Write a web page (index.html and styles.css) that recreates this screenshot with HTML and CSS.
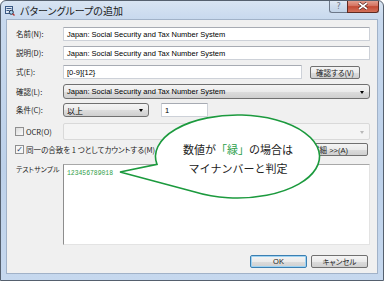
FILE: index.html
```html
<!doctype html>
<html>
<head>
    <title>パターングループの追加</title>
    <meta charset="utf-8" />
    <link rel="stylesheet" href="styles.css">
</head>
<body>
<div class="window">
    <div class="titlebar">
        <svg class="appicon" viewBox="0 0 10 10">
            <rect x="0.5" y="0.5" width="7" height="7" fill="#dfe8f4" stroke="#3b5a86"/>
            <path d="M1.5 2.5h5M1.5 4.5h3" stroke="#3b5a86"/>
            <circle cx="6.3" cy="6.3" r="2" fill="#a8d4f2" stroke="#1f2f4a"/>
            <path d="M7.7 7.7l1.8 1.8" stroke="#b8322a" stroke-width="1.4"/>
        </svg>
        <span class="title">パターングループの追加</span>
        <div class="capbtns">
            <div class="capbtn help">?</div>
            <div class="capbtn close">
                <svg viewBox="0 0 12 8" width="12" height="8">
                    <path d="M2 1l8 6M10 1l-8 6" stroke="#4a1a14" stroke-width="3"/>
                    <path d="M2 1l8 6M10 1l-8 6" stroke="#fff" stroke-width="1.6"/>
                </svg>
            </div>
        </div>
    </div>
    <div class="client">
        <div class="row">
            <span class="lbl">名前(N):</span>
            <div class="edit">Japan: Social Security and Tax Number System</div>
        </div>
        <div class="row">
            <span class="lbl">説明(D):</span>
            <div class="edit">Japan: Social Security and Tax Number System</div>
        </div>
        <div class="row">
            <span class="lbl">式(E):</span>
            <div class="edit">[0-9]{12}</div>
            <div class="btn verify">確認する(V)</div>
        </div>
        <div class="row r4">
            <span class="lbl">確認(L):</span>
            <div class="combo">Japan: Social Security and Tax Number System<span class="arrow"></span></div>
        </div>
        <div class="row r5">
            <span class="lbl">条件(C):</span>
            <div class="combo small">以上<span class="arrow"></span></div>
            <div class="edit num">1</div>
        </div>
        <div class="row r6">
            <span class="lbl chk"><span class="box"></span>OCR(O)</span>
            <div class="combo disabled"><span class="arrow"></span></div>
        </div>
        <div class="row r7">
            <span class="chk"><span class="box checked">✓</span>同一の合致を 1 つとしてカウントする(M)</span>
            <div class="btn detail">詳細 &gt;&gt;(A)</div>
        </div>
        <div class="row r8">
            <span class="lbl top">テストサンプル</span>
            <div class="memo">123456789018</div>
        </div>
        <div class="row r9">
            <div class="btn ok">OK</div>
            <div class="btn cancel">キャンセル</div>
        </div>
    </div>

    <!-- callout over the dialog -->
    <svg class="bubble" viewBox="0 0 384 281" width="384" height="281">
        <path d="M120 172 L157 164.4 A82 41.5 0 1 1 195 192 Z" fill="#fff" stroke="#1c9a3e" stroke-width="1.6" stroke-linejoin="miter"/>
    </svg>
    <div class="bubbletext">
        <div>数値が<span class="green">「緑」</span>の場合は</div>
        <div>マイナンバーと判定</div>
    </div>
</div>
</body>
</html>
```

FILE: styles.css
```css
body {
    margin: 0;
    background: #fff;
}
.window {
    position: relative;
    width: 384px;
    height: 281px;
    box-sizing: border-box;
    border: 1px solid #55606e;
    border-radius: 6px 6px 0 0;
    background: linear-gradient(180deg, #d8e4f2 0, #c8d9ee 18px, #bdd1ea 60%, #c6d8ee 100%);
    display: flex;
    flex-direction: column;
    font-family: "Noto Sans CJK JP", sans-serif;
    font-feature-settings: "palt";
    color: #000;
    overflow: hidden;
}
.titlebar {
    height: 18px;
    display: flex;
    align-items: center;
}
.appicon {
    width: 10px;
    height: 10px;
    margin-left: 4px;
    margin-top: 1px;
}
.title {
    margin-left: 5px;
    margin-top: 2px;
    font-size: 10px;
    line-height: 12px;
    color: #1a1a1a;
}
.capbtns {
    margin-left: auto;
    margin-right: 4px;
    align-self: flex-start;
    margin-top: -1px;
    display: flex;
}
.capbtn {
    height: 13px;
    box-sizing: border-box;
    display: flex;
    align-items: center;
    justify-content: center;
    border: 1px solid #6d7889;
    border-top: none;
}
.help {
    width: 18px;
    border-radius: 0 0 0 3px;
    border-right: none;
    background: linear-gradient(180deg, #e4ecf6, #cfdcec 50%, #c2d3e8);
    font-family: "DejaVu Sans", sans-serif;
    font-size: 8px;
    color: #6b7584;
}
.close {
    width: 32px;
    border-color: #5e2a22;
    border-radius: 0 0 3px 0;
    background: linear-gradient(180deg, #e6a898, #d4705e 50%, #c44a34 55%, #d2705a);
}
.client {
    flex: 1;
    margin: 0 5px 6px 5px;
    background: #f0f0f0;
    border: 1px solid #a1b2c8;
    padding: 7px 7px 0 9px;
    display: flex;
    flex-direction: column;
    font-size: 7.5px;
    color: #222;
}
.row {
    display: flex;
    align-items: center;
    height: 14px;
    margin-top: 5px;
    flex: none;
}
.row:first-child {
    margin-top: 0;
}
.r4 { height: 15px; }
.r5 { margin-top: 4px; }
.r6 { height: 17px; margin-top: 6px; }
.r7 { height: 13px; margin-top: 3px; }
.r8 { height: 81px; margin-top: 8px; align-items: flex-start; }
.r9 { height: 13px; margin-top: 10px; justify-content: flex-end; padding-right: 2px; }

.lbl {
    width: 47px;
    flex: none;
    line-height: 12px;
    white-space: nowrap;
}
.lbl.top {
    margin-top: -1px;
    font-size: 7px;
}
.edit {
    flex: 1;
    height: 100%;
    box-sizing: border-box;
    background: #fff;
    border: 1px solid #cdd1d8;
    border-top-color: #a7abb3;
    border-radius: 1px;
    padding-left: 3px;
    font-family: "Liberation Sans", Arial, sans-serif;
    font-size: 7.5px;
    color: #000;
    display: flex;
    align-items: center;
    white-space: nowrap;
    overflow: hidden;
}
.edit.num {
    flex: none;
    width: 47px;
    margin-left: 12px;
}
.btn {
    height: 13px;
    box-sizing: border-box;
    border: 1px solid #707070;
    border-radius: 2px;
    background: linear-gradient(180deg, #f4f4f4, #ebebeb 50%, #dddddd 51%, #cfcfcf);
    display: flex;
    align-items: center;
    justify-content: center;
    font-size: 7.5px;
    white-space: nowrap;
    flex: none;
}
.verify {
    width: 50px;
    margin-left: 8px;
    margin-right: 10px;
    align-self: flex-end;
}
.detail {
    width: 76px;
    margin-left: auto;
    margin-right: 2px;
    font-family: "Liberation Sans", "Noto Sans CJK JP", sans-serif;
}
.ok {
    width: 57px;
    border-color: #3c7fb1;
    box-shadow: inset 0 0 0 1px #9ed3f3;
    font-family: "Liberation Sans", sans-serif;
}
.cancel {
    width: 57px;
    margin-left: 4px;
}
.combo {
    flex: 1;
    height: 100%;
    box-sizing: border-box;
    position: relative;
    border: 1px solid #707070;
    border-radius: 3px;
    background: linear-gradient(180deg, #f4f4f4, #ebebeb 50%, #dddddd 51%, #cfcfcf);
    padding-left: 3px;
    display: flex;
    align-items: center;
    font-family: "Liberation Sans", Arial, sans-serif;
    font-size: 7.5px;
    color: #000;
    white-space: nowrap;
}
.combo.small {
    flex: none;
    width: 86px;
    font-family: "Noto Sans CJK JP", sans-serif;
    font-size: 8px;
}
.combo.disabled {
    background: #f4f4f4;
    border-color: #d9d9d9;
    border-radius: 2px;
}
.arrow {
    position: absolute;
    right: 5px;
    top: 50%;
    margin-top: -1px;
    border-left: 2.5px solid transparent;
    border-right: 2.5px solid transparent;
    border-top: 3px solid #000;
}
.disabled .arrow {
    border-top-color: #b8b8b8;
}
.chk {
    display: flex;
    align-items: center;
    white-space: nowrap;
    margin-left: -1px;
}
.box {
    width: 9px;
    height: 9px;
    box-sizing: border-box;
    border: 1px solid #8f8f8f;
    background: linear-gradient(135deg, #dcdcdc, #fbfbfb);
    margin-right: 2px;
    display: flex;
    align-items: center;
    justify-content: center;
    font-family: "DejaVu Sans", sans-serif;
    font-size: 8px;
    line-height: 8px;
    color: #1d3b6b;
}
.box.checked {
    background: #f6f6f6;
}
.r6 .lbl {
    width: 48px;
}
.memo {
    flex: 1;
    height: 100%;
    box-sizing: border-box;
    background: #fff;
    border: 1px solid #e3e3e3;
    border-left-color: #8d8d8d;
    border-top-color: #a8a8a8;
    padding: 4px 0 0 3px;
    font-family: "Liberation Mono", monospace;
    font-size: 6.4px;
    line-height: 9px;
    color: #2f9e46;
}
.bubble {
    position: absolute;
    left: -1px;
    top: -1px;
    pointer-events: none;
}
.bubbletext {
    position: absolute;
    left: 154px;
    top: 139px;
    width: 166px;
    text-align: center;
    font-size: 11px;
    line-height: 19px;
    font-feature-settings: normal;
    color: #222;
}
.green {
    color: #2a9e48;
}
```
